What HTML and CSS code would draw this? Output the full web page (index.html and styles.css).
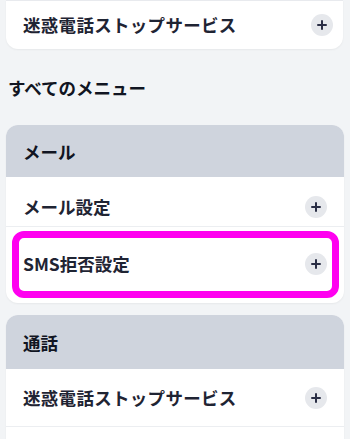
FILE: index.html
```html
<!DOCTYPE html>
<html lang="ja">
<head>
<meta charset="utf-8">
<link rel="stylesheet" href="styles.css">
</head>
<body>
<div class="page">
  <div class="card card-top">
    <div class="row row-top">
      <span class="label label-wide">迷惑電話ストップサービス</span>
      <span class="plus"></span>
    </div>
  </div>

  <h2 class="section-title">すべてのメニュー</h2>

  <div class="card">
    <div class="card-head head-mail">メール</div>
    <div class="row row-1">
      <span class="label">メール設定</span>
      <span class="plus"></span>
    </div>
    <div class="row row-2 highlighted">
      <span class="label">SMS拒否設定</span>
      <span class="plus"></span>
      <span class="highlight"></span>
    </div>
  </div>

  <div class="card card-call">
    <div class="card-head head-call">通話</div>
    <div class="row row-3">
      <span class="label label-wide">迷惑電話ストップサービス</span>
      <span class="plus"></span>
    </div>
    <div class="row row-4"></div>
  </div>
</div>
</body>
</html>
```

FILE: styles.css
```css
html, body {
  margin: 0;
  padding: 0;
  background: #f2f4f6;
}
body {
  width: 350px;
  height: 439px;
  overflow: hidden;
  font-family: "Noto Sans CJK JP", "Noto Sans", sans-serif;
  color: #1f2433;
}
.page {
  display: flex;
  flex-direction: column;
  padding: 0 6px;
}
.card {
  background: #ffffff;
  border-radius: 12px;
  overflow: visible;
  box-shadow: 0 1px 2px rgba(0, 0, 0, 0.05);
}
.card-top {
  border-radius: 0 0 12px 12px;
  border-top: 1px solid #e8eaee;
  margin-right: 1px;
}
.row {
  display: flex;
  align-items: center;
  justify-content: space-between;
  padding-left: 17px;
  padding-right: 17px;
  box-sizing: border-box;
  position: relative;
}
.label {
  font-size: 17.5px;
  font-weight: 700;
  line-height: 24px;
  white-space: nowrap;
}
.label-wide {
  letter-spacing: 0.3px;
}
.plus {
  width: 22px;
  height: 22px;
  border-radius: 50%;
  background: #e6e8ec;
  position: relative;
  flex: none;
}
.plus::before, .plus::after {
  content: "";
  position: absolute;
  background: #2a2e45;
  left: 50%;
  top: 50%;
  border-radius: 1px;
}
.plus::before {
  width: 10px;
  height: 2px;
  transform: translate(-50%, -50%);
}
.plus::after {
  width: 2px;
  height: 10px;
  transform: translate(-50%, -50%);
}
.row-top {
  height: 48px;
  padding-right: 10px;
}
.section-title {
  margin: 0;
  padding: 0 2px;
  height: 76px;
  display: flex;
  align-items: center;
  font-size: 17.5px;
  font-weight: 700;
  color: #111522;
}
.card-head {
  background: #cfd4dd;
  border-radius: 12px 12px 0 0;
  padding-left: 17px;
  font-size: 17.5px;
  font-weight: 700;
  color: #111522;
  display: flex;
  align-items: center;
}
.head-mail {
  height: 52px;
}
.row-1 {
  height: 50px;
  padding-top: 10px;
  border-bottom: 1px solid #eceef1;
}
.row-2 {
  height: 76px;
  padding-bottom: 2px;
}
.highlight {
  position: absolute;
  left: 6px;
  right: 5px;
  top: 4px;
  bottom: 5px;
  border: 7px solid #ff00f0;
  border-radius: 12px;
  pointer-events: none;
}
.card-call {
  margin-top: 12px;
  border-radius: 12px 12px 0 0;
}
.head-call {
  height: 54px;
}
.row-3 {
  height: 58px;
  border-bottom: 1px solid #eceef1;
}
.row-4 {
  height: 30px;
}
```
